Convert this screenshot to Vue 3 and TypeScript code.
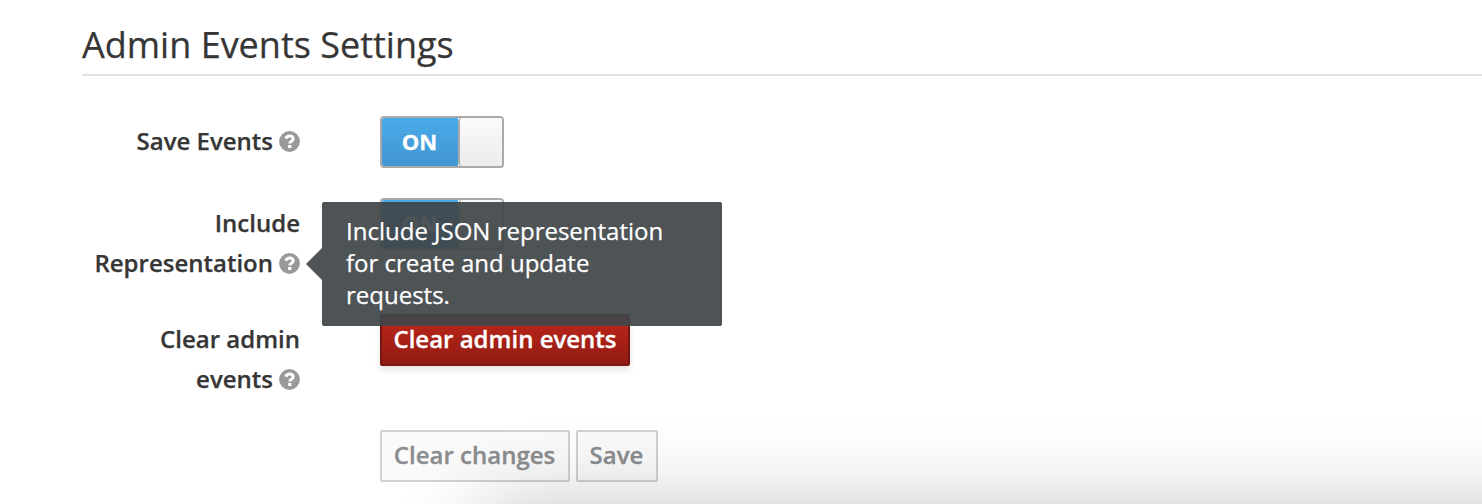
<script setup lang="ts">
interface Row {
  lines: string[]
  kind: 'toggle' | 'danger'
  tip?: string[]
}

const rows: Row[] = [
  { lines: ['Save Events'], kind: 'toggle' },
  {
    lines: ['Include', 'Representation'],
    kind: 'toggle',
    tip: ['Include JSON representation', 'for create and update', 'requests.'],
  },
  { lines: ['Clear admin', 'events'], kind: 'danger' },
]
</script>

<template>
  <main class="page">
    <h2 class="title"><span class="title-text">Admin Events Settings</span></h2>
    <div v-for="row in rows" :key="row.lines[0]" class="row">
      <div class="label">
        <div v-for="(line, i) in row.lines" :key="line" class="line">
          <span>{{ line }}</span>
          <svg v-if="i === row.lines.length - 1" class="help" viewBox="0 0 21 21">
            <circle cx="10.5" cy="10.5" r="10.4" fill="#999" />
            <path
              d="M6.7 7.7C7.5 5.8 8.8 4.9 10.7 4.9c2 0 3.5 1.2 3.5 2.8 0 2.7-3.4 2.5-3.4 4.7"
              fill="none"
              stroke="#fff"
              stroke-width="3"
            />
            <rect x="9.1" y="13.9" width="3.3" height="3.2" rx=".3" fill="#fff" />
          </svg>
        </div>
        <div v-if="row.tip" class="tip">
          <div v-for="t in row.tip" :key="t">{{ t }}</div>
        </div>
      </div>
      <div v-if="row.kind === 'toggle'" class="toggle">
        <span class="on">ON</span>
        <span class="handle"></span>
      </div>
      <button v-else class="btn danger">Clear admin events</button>
    </div>
    <div class="row actions">
      <button class="btn muted clear">Clear changes</button>
      <button class="btn muted save">Save</button>
    </div>
    <div class="shade"></div>
  </main>
</template>

<style>
body {
  background: #fff;
}
</style>

<style scoped>
.page {
  position: relative;
  box-sizing: border-box;
  height: 504px;
  padding-left: 82px;
  overflow: hidden;
  font-family: 'Open Sans', sans-serif;
  font-size: 24px;
  color: #363636;
}
.title {
  box-sizing: border-box;
  height: 76px;
  margin: 0 0 40px;
  padding-top: 24px;
  border-bottom: 2px solid #e3e3e3;
  font-size: 36px;
  font-weight: 400;
  line-height: 42px;
}
.title-text {
  -webkit-text-stroke: 0.25px currentColor;
}
.row {
  display: flex;
  align-items: flex-start;
  min-height: 52px;
  margin-bottom: 30px;
}
.label {
  position: relative;
  box-sizing: border-box;
  width: 218px;
  margin-right: 80px;
  padding: 5px 0 1px;
  font-weight: 600;
}
.line {
  display: flex;
  align-items: center;
  justify-content: flex-end;
  gap: 6px;
  height: 40px;
  line-height: 40px;
}
.line span {
  -webkit-text-stroke: 0.25px currentColor;
}
.help {
  width: 21px;
  height: 21px;
}
.toggle {
  display: flex;
  box-sizing: border-box;
  width: 124px;
  height: 52px;
  border: 2px solid #aaa;
  border-radius: 4px;
}
.on {
  width: 76px;
  border-radius: 2px 0 0 2px;
  background: linear-gradient(#4aa9e9, #4297d0);
  color: #fff;
  font-size: 22px;
  font-weight: 700;
  line-height: 47px;
  text-align: center;
  text-indent: -1px;
  -webkit-text-stroke: 0.3px currentColor;
}
.handle {
  box-sizing: border-box;
  width: 44px;
  border-left: 2px solid #aaa;
  border-radius: 4px 2px 2px 4px;
  background: linear-gradient(#fafafa, #ececec);
}
.btn {
  box-sizing: border-box;
  height: 52px;
  padding: 0 0 2px;
  border: 2px solid;
  border-radius: 2px;
  font: 600 24px/46px 'Open Sans', sans-serif;
  white-space: nowrap;
  -webkit-text-stroke: 0.3px currentColor;
}
.danger {
  width: 250px;
  border-color: #781611;
  background: linear-gradient(#bd261a, #911b13);
  box-shadow: 0 4px 6px rgba(3, 3, 3, 0.1);
  color: #fff;
}
.actions {
  gap: 6px;
  padding-left: 298px;
}
.muted {
  padding-right: 1px;
  border-color: #d1d1d1;
  background: #fafafa;
  color: #8b8d8f;
}
.clear {
  width: 190px;
}
.save {
  width: 82px;
}
.tip {
  position: absolute;
  z-index: 1;
  top: 4px;
  left: 240px;
  box-sizing: border-box;
  width: 400px;
  height: 124px;
  padding: 13px 24px;
  border-radius: 2px;
  background: rgba(65, 70, 73, 0.93);
  color: #fff;
  font-weight: 400;
  line-height: 32px;
  -webkit-text-stroke: 0.25px currentColor;
}
.tip::before {
  content: '';
  position: absolute;
  top: 46px;
  left: -16px;
  border: 16px solid transparent;
  border-left: 0;
  border-right-color: rgba(65, 70, 73, 0.93);
}
.shade {
  position: absolute;
  top: 508px;
  left: 480px;
  width: 1300px;
  height: 400px;
  box-shadow: 0 0 80px rgba(0, 0, 0, 0.24);
}
</style>
